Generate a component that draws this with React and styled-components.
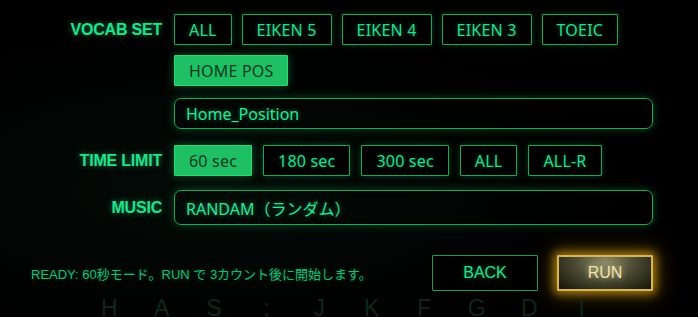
import React from 'react';
import styled, { createGlobalStyle, css } from 'styled-components';

const GlobalStyle = createGlobalStyle`
  html, body {
    margin: 0;
    padding: 0;
    background: #000;
    overflow: hidden;
  }
  * { box-sizing: border-box; }
`;

const Screen = styled.div`
  width: 698px;
  height: 317px;
  overflow: hidden;
  background: radial-gradient(ellipse at 30% 60%, rgba(20, 60, 40, 0.18), rgba(0, 0, 0, 0) 60%), #000;
  font-family: 'Noto Sans', 'Noto Sans CJK JP', sans-serif;
  color: #22e08c;
  padding-top: 14px;
`;

const Row = styled.div`
  display: grid;
  grid-template-columns: 162px 479px;
  column-gap: 12px;
  align-items: center;
  margin-top: ${(p) => p.$mt || 0}px;
`;

const Label = styled.div`
  font-family: 'Liberation Sans', sans-serif;
  font-weight: 700;
  font-size: 16px;
  letter-spacing: -0.2px;
  text-align: right;
  color: #22e08c;
  text-shadow: 0 0 6px rgba(34, 224, 140, 0.55);
`;

const Options = styled.div`
  display: flex;
  gap: ${(p) => p.$gap || 10}px;
`;

const Option = styled.button`
  height: 31px;
  padding: 0 14px;
  font-family: 'Noto Sans', sans-serif;
  font-size: 16px;
  letter-spacing: 0.2px;
  border: 1.5px solid #1aa75a;
  border-radius: 1px;
  background: #000;
  color: #26dd8e;
  text-shadow: 0 0 4px rgba(38, 221, 142, 0.45);
  box-shadow: 0 0 6px rgba(26, 167, 90, 0.35);
  cursor: pointer;
  ${(p) => p.$active && css`
    background: #1fc064;
    border-color: #2ad877;
    color: #0b3a20;
    text-shadow: none;
    box-shadow: 0 0 8px rgba(31, 192, 100, 0.45);
  `}
`;

const Field = styled.div`
  height: ${(p) => p.$h || 31}px;
  border: 1.5px solid #1aa75a;
  border-radius: 7px;
  display: flex;
  align-items: center;
  padding-left: 11px;
  font-size: 16px;
  color: #2ae596;
  text-shadow: 0 0 5px rgba(42, 229, 150, 0.5);
  box-shadow: 0 0 10px rgba(26, 167, 90, 0.4);
`;

const Footer = styled.div`
  display: flex;
  align-items: center;
  margin-top: 30px;
  padding-left: 31px;
  width: 653px;
`;

const Status = styled.div`
  flex: 1;
  font-family: 'Liberation Sans', 'Noto Sans CJK JP', sans-serif;
  font-size: 13px;
  color: #1cba74;
  text-shadow: 0 0 4px rgba(28, 186, 116, 0.4);
`;

const ActionButton = styled.button`
  height: 36px;
  width: ${(p) => p.$w}px;
  margin-left: ${(p) => p.$ml || 0}px;
  font-family: 'Liberation Sans', sans-serif;
  font-size: 16px;
  border: 1.5px solid #1a9c56;
  border-radius: 1px;
  background: #000;
  color: #27e08f;
  text-shadow: 0 0 5px rgba(39, 224, 143, 0.5);
  cursor: pointer;
  ${(p) => p.$gold && css`
    border: 2px solid #d7b458;
    color: #f1e3b0;
    background: radial-gradient(ellipse at 50% 15%, #8b8a66 0%, #4c4c34 45%, #141408 100%);
    box-shadow: 0 0 10px 3px rgba(230, 170, 30, 0.65), 0 0 22px 6px rgba(200, 140, 10, 0.3);
    text-shadow: 0 0 6px rgba(255, 230, 160, 0.7);
  `}
`;

const Keys = styled.div`
  display: flex;
  padding-left: 83px;
  margin-top: 4px;
`;

const Key = styled.span`
  width: 52.5px;
  text-align: center;
  font-family: 'Liberation Sans', sans-serif;
  font-size: 23px;
  color: #10261a;
`;

const vocab = ['ALL', 'EIKEN 5', 'EIKEN 4', 'EIKEN 3', 'TOEIC'];
const times = ['60 sec', '180 sec', '300 sec', 'ALL', 'ALL-R'];
const keys = ['H', 'A', 'S', ':', 'J', 'K', 'F', 'G', 'D', 'I'];

const App = () => {
  return (
    <Screen>
      <GlobalStyle />
      <Row>
        <Label>VOCAB SET</Label>
        <Options>
          {vocab.map((v) => (
            <Option key={v}>{v}</Option>
          ))}
        </Options>
      </Row>
      <Row $mt={10}>
        <div />
        <Options>
          <Option $active>HOME POS</Option>
        </Options>
      </Row>
      <Row $mt={12}>
        <div />
        <Field>Home_Position</Field>
      </Row>
      <Row $mt={16}>
        <Label>TIME LIMIT</Label>
        <Options $gap={11}>
          {times.map((t, i) => (
            <Option key={t} $active={i === 0}>{t}</Option>
          ))}
        </Options>
      </Row>
      <Row $mt={14}>
        <Label>MUSIC</Label>
        <Field $h={35}>RANDAM（ランダム）</Field>
      </Row>
      <Footer>
        <Status>READY: 60秒モード。RUN で 3カウント後に開始します。</Status>
        <ActionButton $w={106}>BACK</ActionButton>
        <ActionButton $w={96} $ml={19} $gold>RUN</ActionButton>
      </Footer>
      <Keys>
        {keys.map((k, i) => (
          <Key key={i}>{k}</Key>
        ))}
      </Keys>
    </Screen>
  );
};

export default App;
